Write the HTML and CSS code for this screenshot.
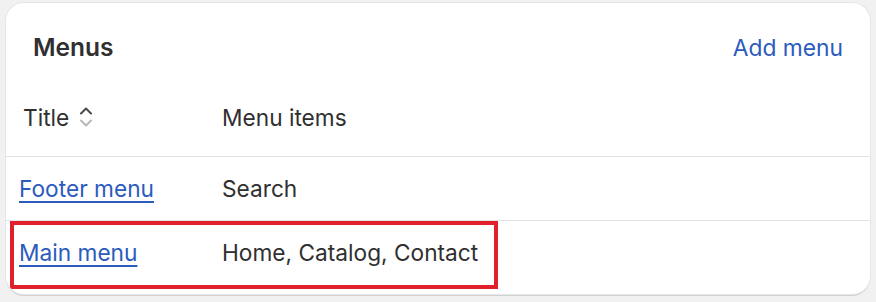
FILE: index.html
```html
<!DOCTYPE html>
<html lang="en">
<head>
    <meta charset="UTF-8">
    <meta name="viewport" content="width=device-width, initial-scale=1.0">
    <title>Menus</title>
    <link rel="stylesheet" href="styles.css">
</head>
<body>
    <div class="card">
        <div class="card-header">
            <h2>Menus</h2>
            <a href="#" class="add-link">Add menu</a>
        </div>
        <div class="table">
            <div class="row head">
                <div class="col-title">
                    <button class="sort-btn">
                        Title
                        <svg class="sort-icon" width="14" height="24" viewBox="0 0 14 24">
                            <path d="M2 8.5 L7 3.5 L12 8.5" fill="none" stroke="#4a4a4a" stroke-width="2" stroke-linecap="round" stroke-linejoin="round"/>
                            <path d="M2 15.5 L7 20.5 L12 15.5" fill="none" stroke="#b8b8b8" stroke-width="2" stroke-linecap="round" stroke-linejoin="round"/>
                        </svg>
                    </button>
                </div>
                <div class="col-items">Menu items</div>
            </div>
            <div class="row">
                <div class="col-title"><a href="#">Footer menu</a></div>
                <div class="col-items">Search</div>
            </div>
            <div class="row highlighted">
                <div class="col-title"><a href="#">Main menu</a></div>
                <div class="col-items">Home, Catalog, Contact</div>
                <div class="highlight-box"></div>
            </div>
        </div>
    </div>
</body>
</html>
```

FILE: styles.css
```css
:root {
    --bg-color: #f1f1f1;
    --card-bg: #ffffff;
    --text-primary: #303030;
    --link-color: #2b5bbd;
    --border-color: #e3e3e3;
    --mark-red: #e0202b;
}

* {
    box-sizing: border-box;
}

body {
    font-family: 'Inter', 'Noto Sans', sans-serif;
    background-color: var(--bg-color);
    color: var(--text-primary);
    margin: 0;
    padding: 3px 6px;
}

.card {
    width: 864px;
    height: 291px;
    background: var(--card-bg);
    border-radius: 18px;
    box-shadow: 0 0 0 1px #e6e6e6, 0 2px 0 #d2d2d2;
    overflow: hidden;
}

.card-header {
    display: flex;
    justify-content: space-between;
    align-items: center;
    height: 88px;
    padding: 0 27px;
}

h2 {
    margin: 0;
    font-size: 24.5px;
    font-weight: 600;
}

.add-link {
    color: var(--link-color);
    font-size: 22.8px;
    text-decoration: none;
}

.row {
    display: flex;
    align-items: center;
    height: 64px;
    padding: 0 13px;
    font-size: 22.7px;
    border-top: 1px solid var(--border-color);
    position: relative;
}

.row.head {
    border-top: none;
    height: 65px;
    padding-bottom: 13px;
}

.col-title {
    width: 203px;
}

.col-title a {
    color: var(--link-color);
    text-decoration: underline;
    text-underline-offset: 4px;
    text-decoration-thickness: 2px;
}

.sort-btn {
    display: flex;
    align-items: center;
    gap: 10px;
    background: none;
    border: none;
    padding: 0 4px;
    font: inherit;
    color: inherit;
}

.highlight-box {
    position: absolute;
    left: 4px;
    top: 0;
    width: 488px;
    height: 68px;
    border: 4px solid var(--mark-red);
}
```
